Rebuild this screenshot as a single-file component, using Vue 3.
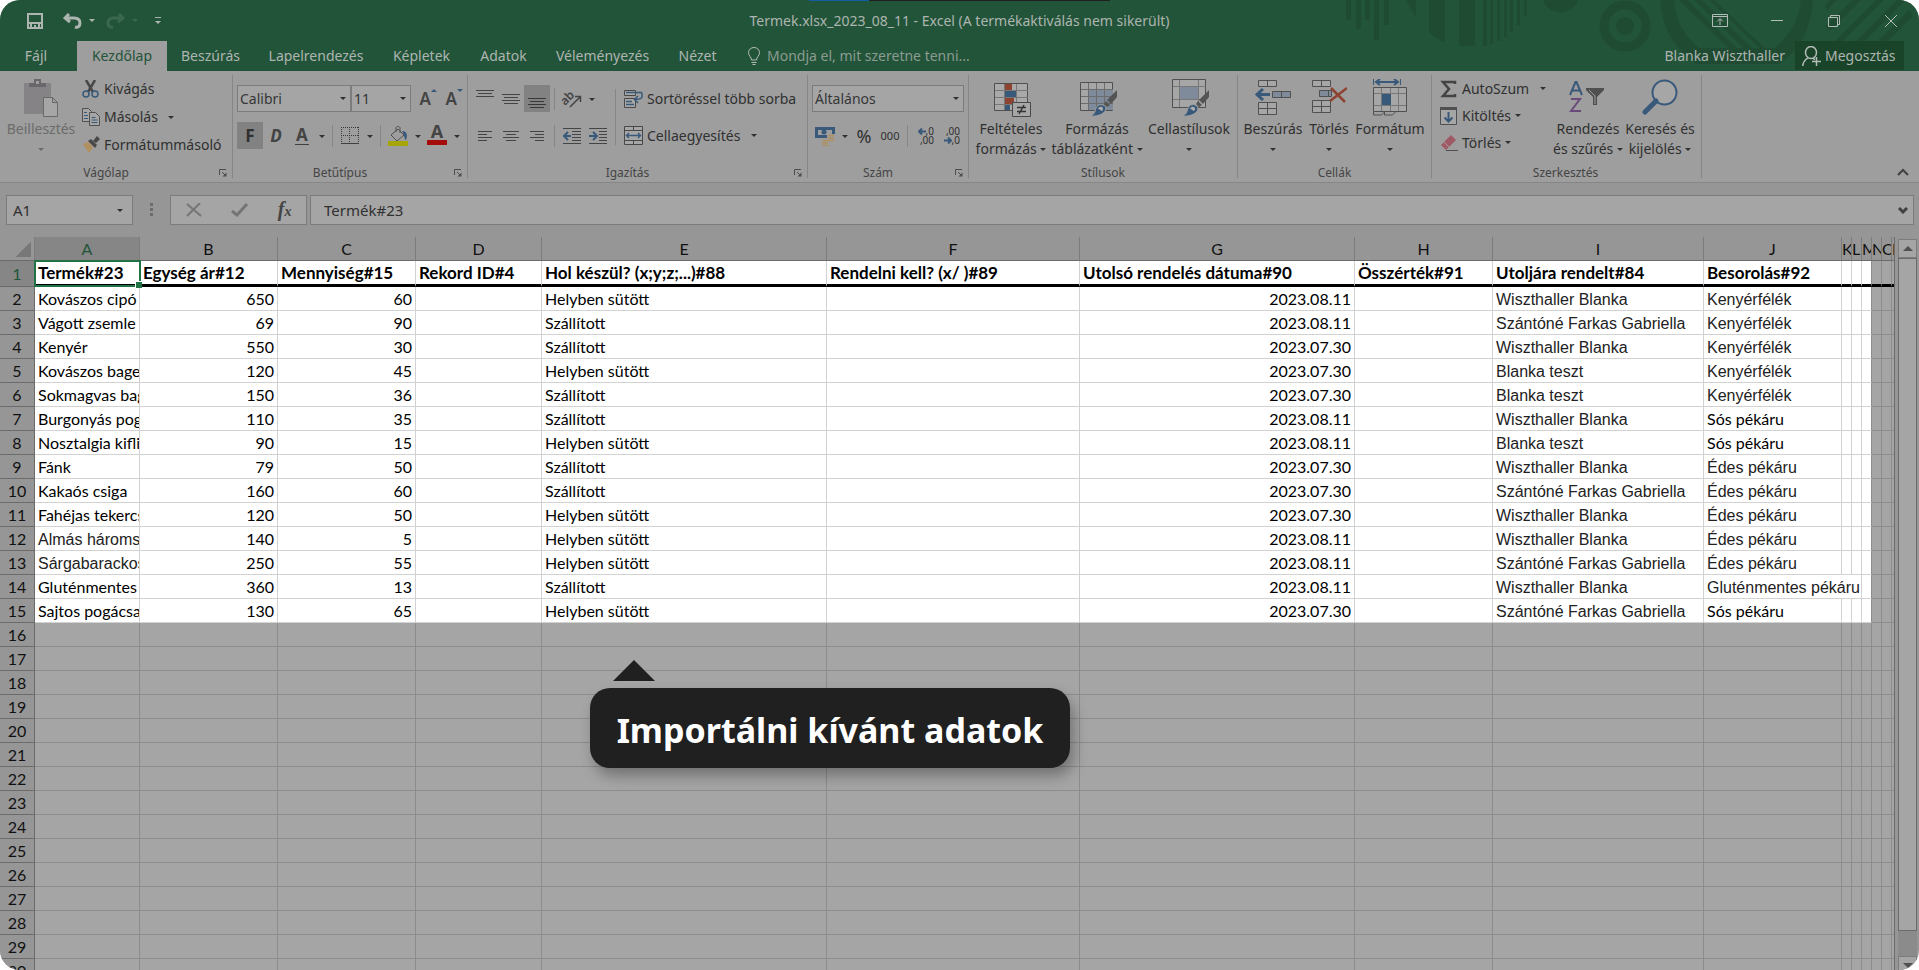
<script setup>
import { ref } from 'vue'

const nameBox = ref('A1')
const formula = ref('Termék#23')
const fontName = ref('Calibri')
const fontSize = ref('11')
const numberFormat = ref('Általános')

const tabs = ['Fájl', 'Kezdőlap', 'Beszúrás', 'Lapelrendezés', 'Képletek', 'Adatok', 'Véleményezés', 'Nézet']
const columns = 'ABCDEFGHIJKLMNOP'.split('')
const headings = [
  'Termék#23', 'Egység ár#12', 'Mennyiség#15', 'Rekord ID#4', 'Hol készül? (x;y;z;...)#88',
  'Rendelni kell? (x/ )#89', 'Utolsó rendelés dátuma#90', 'Összérték#91', 'Utoljára rendelt#84', 'Besorolás#92',
]
const W = 'Wiszthaller Blanka'
const S = 'Szántóné Farkas Gabriella'
const B = 'Blanka teszt'
const products = [
  ['Kovászos cipó', 650, 60, 'Helyben sütött', '2023.08.11', W, 'Kenyérfélék'],
  ['Vágott zsemle', 69, 90, 'Szállított', '2023.08.11', S, 'Kenyérfélék'],
  ['Kenyér', 550, 30, 'Szállított', '2023.07.30', W, 'Kenyérfélék'],
  ['Kovászos bagett', 120, 45, 'Helyben sütött', '2023.07.30', B, 'Kenyérfélék'],
  ['Sokmagvas bagett', 150, 36, 'Szállított', '2023.07.30', B, 'Kenyérfélék'],
  ['Burgonyás pogácsa', 110, 35, 'Szállított', '2023.08.11', W, 'Sós pékáru'],
  ['Nosztalgia kifli', 90, 15, 'Helyben sütött', '2023.08.11', B, 'Sós pékáru'],
  ['Fánk', 79, 50, 'Szállított', '2023.07.30', W, 'Édes pékáru'],
  ['Kakaós csiga', 160, 60, 'Szállított', '2023.07.30', S, 'Édes pékáru'],
  ['Fahéjas tekercs', 120, 50, 'Helyben sütött', '2023.07.30', W, 'Édes pékáru'],
  ['Almás háromszög', 140, 5, 'Helyben sütött', '2023.08.11', W, 'Édes pékáru'],
  ['Sárgabarackos táska', 250, 55, 'Helyben sütött', '2023.08.11', S, 'Édes pékáru'],
  ['Gluténmentes kenyér', 360, 13, 'Szállított', '2023.08.11', W, 'Gluténmentes pékáru'],
  ['Sajtos pogácsa', 130, 65, 'Helyben sütött', '2023.07.30', S, 'Sós pékáru'],
]

const cell = (value, kind = '', span = 1, lit = true) => ({ value, kind, span, lit })
const dataRows = products.map(([name, price, qty, made, date, by, type]) => {
  const wide = type.startsWith('Glut')
  return [
    cell(name, name.startsWith('Almás') || name.startsWith('Sárga') ? 'arial' : ''),
    cell(price, 'num'), cell(qty, 'num'), cell(''), cell(made), cell(''), cell(date, 'num'), cell(''),
    cell(by, 'arial'),
    cell(type, type.startsWith('Sós') ? '' : 'arial', wide ? 3 : 1),
    ...(wide ? [] : [cell(''), cell('')]),
    cell('', 'edge'), cell('', '', 1, false), cell('', '', 1, false), cell('', '', 1, false),
  ]
})
const headRow = columns.map((c, i) => cell(headings[i] || '', i === 0 ? 'active' : i === 12 ? 'edge' : '', 1, i < 13))
const emptyRows = Array.from({ length: 15 }, () => columns.map(() => cell('', '', 1, false)))
const rows = [headRow, ...dataRows, ...emptyRows]
</script>

<template>
  <div class="window">
    <svg class="defs" aria-hidden="true">
      <symbol id="launcher" viewBox="0 0 8 8"><path d="M.5 6V.5H7M3 3l3.500 3.500" fill="none" stroke="#4d4d4d" /><path d="M7.500 3.500v4h-4z" fill="#4d4d4d" /></symbol>
      <symbol id="brush" viewBox="0 0 28 28">
        <path d="M27 1v7l-6 7-4-4z" fill="#545454" /><path d="M16 12l4 4-3 2-3-3z" fill="#545454" />
        <path d="M0 27c4-1 5-4 6-8 2-5 9-4 10 0 0 5-7 9-16 8z" fill="#38597a" stroke="#a0a0a0" />
        <path d="M8 20c1-3 5-3 5 0 0 1-1 2-2 2 0-1-1-2-3-2z" fill="#b0b0b0" />
      </symbol>
    </svg>

    <header class="top">
      <svg class="pattern" width="580" height="71" viewBox="0 0 580 71" aria-hidden="true">
        <g fill="#1f4b33">
          <path d="M7 0h5v20H7zM17 0h5v29h-5zM26 0h5v20h-5zM35 0h5v40h-5zM45 0h5v25h-5zM67 0h10v18zM90 0h16v42q-8-2-16-10zM120 0h16v46h-16zM144 0h4v46h-4zM151 0h3v44h-3zM158 0h3v41h-3zM165 0h3v37h-3zM171 0h3v32h-3zM178 0h3v25h-3zM185 0h3v16h-3z" />
          <path d="M204 0a18 16 0 0 0 35 0z" /><circle cx="286" cy="26" r="9" />
          <path d="M321 0h14q2 30 25 48h75q24-18 27-48h12q-2 42-34 64h-82Q324 42 321 0z" />
          <path d="M340 0h8l60 58h-8zM355 0h8l58 56h-8zM370 0h5l57 54h-5z" />
          <path d="M486 5l5-5h7l-10 10zM486 27l27-27h9l-31 31zM496 41l41-41h8l-44 44zM508 50l50-50h9l-52 52zM530 50l40-40 4 6-36 36z" />
        </g>
        <circle cx="286" cy="26" r="21" fill="none" stroke="#1f4b33" stroke-width="9" />
      </svg>

      <div class="titlebar">
        <div class="quick">
          <button aria-label="Mentés"><svg width="16" height="16" viewBox="0 0 16 16"><path d="M1 1h14v14H1zM1 10h14M4 15v-4M12 15v-4" fill="none" stroke="#adb5b0" stroke-width="2" /><path d="M7 12h2v3H7z" fill="#adb5b0" /></svg></button>
          <button aria-label="Visszavonás" class="undo"><svg width="19" height="16" viewBox="0 0 19 16"><path d="M6 1L2 5l5 4M2 5h9c4 0 6 2 6 5 0 3-2 5-5 4" fill="none" stroke="#adb5b0" stroke-width="3" /></svg><i class="caret"></i></button>
          <button aria-label="Mégis" class="redo"><svg width="19" height="16" viewBox="0 0 19 16"><path d="M13 1l4 4-5 4M17 5H8C4 5 2 7 2 10c0 3 2 5 5 4" fill="none" stroke="#3a684f" stroke-width="3" /></svg><i class="caret"></i></button>
          <button aria-label="Testreszabás" class="custom"><i class="bar"></i><i class="caret"></i></button>
        </div>
        <h1>Termek.xlsx_2023_08_11 - Excel (A termékaktiválás nem sikerült)</h1>
        <div class="controls">
          <button aria-label="Menüszalag"><svg width="16" height="13" viewBox="0 0 16 13"><path d="M.5.5h15v12H.5zM.5 2.500h15M8 11V5M5 7.500L8 4.500l3 3" fill="none" stroke="#b4bcb7" /></svg></button>
          <button aria-label="Kis méret"><svg width="12" height="12" viewBox="0 0 12 12"><path d="M0 5.500h12" stroke="#b4bcb7" /></svg></button>
          <button aria-label="Előző méret"><svg width="12" height="12" viewBox="0 0 12 12"><path d="M.5 2.500h9v9h-9zM2.500 2V.5h9v9H10" fill="none" stroke="#b4bcb7" /></svg></button>
          <button aria-label="Bezárás"><svg width="12" height="12" viewBox="0 0 12 12"><path d="M0 0l12 12M12 0L0 12" stroke="#b4bcb7" /></svg></button>
        </div>
      </div>

      <div class="tabrow">
        <nav class="tabs">
          <button v-for="tab in tabs" :key="tab" :class="{ current: tab === 'Kezdőlap' }">{{ tab }}</button>
        </nav>
        <button class="tell">
          <svg width="12" height="19" viewBox="0 0 12 19"><path d="M3.500 13c0-3-3-4-3-7.500a5.500 5 0 0 1 11 0c0 3.500-3 4.500-3 7.500zM3.500 15.500h5M4.500 17.500h3" fill="none" stroke="#b4bcb7" /></svg>
          Mondja el, mit szeretne tenni...
        </button>
        <span class="user">Blanka Wiszthaller</span>
        <button class="share">
          <svg width="19" height="20" viewBox="0 0 19 20"><ellipse cx="9" cy="6.500" rx="5.500" ry="6" fill="none" stroke="#b4bcb7" stroke-width="1.500" /><path d="M.8 20c0-4 2-6 5-8M11 12.500l2 1M10 15.500h9M14.500 11v9" fill="none" stroke="#b4bcb7" stroke-width="1.500" /></svg>
          Megosztás
        </button>
      </div>
    </header>

    <section class="ribbon" aria-label="Menüszalag">
      <div class="group clipboard">
        <div class="body">
          <button class="big off">
            <svg width="36" height="38" viewBox="0 0 36 38"><path d="M1 4h27v31H1z" fill="#858386" /><path d="M6 8V4h5V0h7v4h5v4z" fill="#69676b" /><path d="M13 2h3v3h-3z" fill="#9e9e9e" /><path d="M20.500 18.500h9l5 5v14h-14zM29.500 18.500v5h5" fill="#a6a6a6" stroke="#696969" /></svg>
            <span>Beillesztés</span><span><i class="caret"></i></span>
          </button>
          <div class="stack">
            <button><svg width="18" height="18" viewBox="0 0 18 18"><path d="M4 0l7 12M13 0L6 12" stroke="#484848" stroke-width="2.500" /><circle cx="4" cy="14" r="3" fill="none" stroke="#38597a" stroke-width="1.500" /><circle cx="13" cy="14" r="3" fill="none" stroke="#38597a" stroke-width="1.500" /></svg>Kivágás</button>
            <button><svg width="18" height="18" viewBox="0 0 18 18"><path d="M.5.5h6l3 3v10h-9z" fill="#a6a6a6" stroke="#505050" /><path d="M7.500 4.500h6l4 4v9h-10z" fill="#a6a6a6" stroke="#505050" /><path d="M2 4.500h3M2 7.500h4M2 10.500h4M9.500 9.500h4M9.500 12h6M9.500 14.500h6" stroke="#38597a" /></svg>Másolás<i class="caret"></i></button>
            <button><svg width="18" height="18" viewBox="0 0 18 18"><path d="M1 8l5-2 5 5-4 6z" fill="#b0905f" /><path d="M6 5l3-2 6 6-2 3z" fill="#484848" /><path d="M11 5l4-5 3 3-4 4z" fill="#484848" /></svg>Formátummásoló</button>
          </div>
        </div>
        <footer>Vágólap<button class="launch" aria-label="Vágólap beállításai"><svg width="8" height="8"><use href="#launcher" /></svg></button></footer>
      </div>
      <i class="rule"></i>

      <div class="group font">
        <div class="body rows">
          <div class="line">
            <div class="pick"><select v-model="fontName" aria-label="Betűtípus"><option>Calibri</option></select><i class="caret"></i></div>
            <div class="pick size"><select v-model="fontSize" aria-label="Betűméret"><option>11</option></select><i class="caret"></i></div>
            <button class="grow"><b>A</b><i class="caret up"></i></button>
            <button class="grow"><b>A</b><i class="caret blue"></i></button>
          </div>
          <div class="line">
            <button class="tool pressed"><b>F</b></button>
            <button class="tool"><b class="it">D</b></button>
            <button class="tool"><b class="ul">A</b></button>
            <button class="drop" aria-label="Aláhúzás"><i class="caret"></i></button>
            <i class="mini"></i>
            <button class="tool" aria-label="Szegélyek"><svg width="18" height="18" viewBox="0 0 18 18"><path d="M.5 0v16M17.500 0v16M8.500 0v16M0 .5h18M0 8.500h18" stroke="#383838" stroke-dasharray="1 1" /><path d="M0 16.500h18" stroke="#404040" /></svg></button>
            <button class="drop" aria-label="Szegély típusa"><i class="caret"></i></button>
            <i class="mini"></i>
            <button class="tool" aria-label="Kitöltőszín"><svg width="20" height="20" viewBox="0 0 20 20"><path d="M3 9l7-6 6 6-7 6zM8 6V2c0-2 4-2 4 0v5" fill="none" stroke="#505050" /><path d="M14 5c5 0 6 4 4 9-2-1-1-4-4-9z" fill="#38597a" /><path d="M0 15h20v5H0z" fill="#a6a60b" /></svg></button>
            <button class="drop" aria-label="Kitöltőszín választása"><i class="caret"></i></button>
            <button class="tool colour" aria-label="Betűszín"><b>A</b><i class="red"></i></button>
            <button class="drop" aria-label="Betűszín választása"><i class="caret"></i></button>
          </div>
        </div>
        <footer>Betűtípus<button class="launch" aria-label="Betűtípus beállításai"><svg width="8" height="8"><use href="#launcher" /></svg></button></footer>
      </div>
      <i class="rule"></i>

      <div class="group align">
        <div class="body">
          <div class="rows">
            <div class="line">
              <button class="tool" aria-label="Felülre"><svg width="18" height="18" viewBox="0 0 18 18"><path d="M0 .5h18M2 3.500h14M0 6.500h18" stroke="#444" /></svg></button>
              <button class="tool" aria-label="Középre"><svg width="18" height="18" viewBox="0 0 18 18"><path d="M0 4.500h18M2 7.500h14M0 10.500h18M2 13.500h14" stroke="#444" /></svg></button>
              <button class="tool pressed" aria-label="Alulra"><svg width="18" height="18" viewBox="0 0 18 18"><path d="M0 8.500h18M2 11.500h14M0 14.500h18M2 17.500h14" stroke="#383838" /></svg></button>
              <i class="mini"></i>
              <button class="tool" aria-label="Tájolás"><svg width="20" height="18" viewBox="0 0 20 18"><text x="0" y="13" transform="rotate(-45 5 11)" font-family="Noto Sans, sans-serif" font-weight="600" font-size="12" fill="#444">ab</text><path d="M8 17L18 7M13 6.500h5.500V12" stroke="#444" stroke-width="1.500" fill="none" /></svg></button>
              <button class="drop" aria-label="Tájolás választása"><i class="caret"></i></button>
            </div>
            <div class="line">
              <button class="tool" aria-label="Balra"><svg width="16" height="12" viewBox="0 0 16 12"><path d="M1 1.500h14M1 4.500h9M1 7.500h14M1 10.500h9" stroke="#444" /></svg></button>
              <button class="tool" aria-label="Középre igazítás"><svg width="16" height="12" viewBox="0 0 16 12"><path d="M0 1.500h16M3 4.500h10M0 7.500h16M3 10.500h10" stroke="#444" /></svg></button>
              <button class="tool" aria-label="Jobbra"><svg width="16" height="12" viewBox="0 0 16 12"><path d="M1 1.500h14M6 4.500h9M1 7.500h14M6 10.500h9" stroke="#444" /></svg></button>
              <i class="mini"></i>
              <button class="tool" aria-label="Behúzás csökkentése"><svg width="18" height="16" viewBox="0 0 18 16"><path d="M0 .5h18M9 3.500h9M9 6.500h9M9 9.500h9M9 12.500h9M0 15.500h18" stroke="#444" /><path d="M1 8h7M5 4L1 8l4 4" stroke="#38597a" stroke-width="2" fill="none" /></svg></button>
              <button class="tool" aria-label="Behúzás növelése"><svg width="18" height="16" viewBox="0 0 18 16"><path d="M0 .5h18M10 3.500h8M10 6.500h8M10 9.500h8M10 12.500h8M0 15.500h18" stroke="#444" /><path d="M0 8h7M4 4l4 4-4 4" stroke="#38597a" stroke-width="2" fill="none" /></svg></button>
            </div>
          </div>
          <i class="tall"></i>
          <div class="rows">
            <button class="line text"><svg width="19" height="18" viewBox="0 0 19 18"><path d="M.5.5h11v5H.5zM.5 8.500h11v9H.5z" fill="#a6a6a6" stroke="#484848" /><path d="M2 2.500h15.500c2 6-1 7-6 7M14 6l-3.500 3.500L14 13M2 11.500h6M2 14.500h8" fill="none" stroke="#38597a" stroke-width="1.500" /></svg>Sortöréssel több sorba</button>
            <button class="line text"><svg width="19" height="19" viewBox="0 0 19 19"><path d="M.5.5h18v18H.5zM.5 4.500h18M.5 14.500h18M9.500 0v4M9.500 15v4" fill="#a6a6a6" stroke="#484848" /><path d="M3 9.500h13M5 7L2.500 9.500 5 12M14 7l2.500 2.500L14 12" stroke="#38597a" stroke-width="1.500" fill="none" /></svg>Cellaegyesítés<i class="caret"></i></button>
          </div>
        </div>
        <footer>Igazítás<button class="launch" aria-label="Igazítás beállításai"><svg width="8" height="8"><use href="#launcher" /></svg></button></footer>
      </div>
      <i class="rule"></i>

      <div class="group number">
        <div class="body rows">
          <div class="line"><div class="pick wide"><select v-model="numberFormat" aria-label="Számformátum"><option>Általános</option></select><i class="caret"></i></div></div>
          <div class="line">
            <button class="tool" aria-label="Pénznem"><svg width="20" height="20" viewBox="0 0 20 20"><path d="M1.500 2.500h17v8h-17z" fill="none" stroke="#38597a" stroke-width="3" /><circle cx="9" cy="6" r="2.500" fill="#38597a" /><path d="M12 8h8v9h-5v3H6v-7h6z" fill="#9e9e9e" /><path d="M13 9.500h6M13 12h6M13 14.500h6M7 14.500h6M7 17h6M7 19.500h7" stroke="#b0905f" stroke-width="1.500" /></svg></button>
            <button class="drop" aria-label="Pénznem választása"><i class="caret"></i></button>
            <button class="tool pct">%</button>
            <button class="tool zero">000</button>
            <i class="mini"></i>
            <button class="tool dec" aria-label="Több tizedesjegy"><span><svg width="8" height="7" viewBox="0 0 8 7"><path d="M1 3.500h7M4 .5l-3 3 3 3" fill="none" stroke="#38597a" stroke-width="2" /></svg>,0</span><span>,00</span></button>
            <button class="tool dec" aria-label="Kevesebb tizedesjegy"><span>,00</span><span><svg width="8" height="7" viewBox="0 0 8 7"><path d="M0 3.500h7M4 .5l3 3-3 3" fill="none" stroke="#38597a" stroke-width="2" /></svg>,0</span></button>
          </div>
        </div>
        <footer>Szám<button class="launch" aria-label="Szám beállításai"><svg width="8" height="8"><use href="#launcher" /></svg></button></footer>
      </div>
      <i class="rule"></i>

      <div class="group styles">
        <div class="body">
          <button class="big">
            <svg width="38" height="38" viewBox="0 0 38 38"><path d="M.5 4.500h33v27H.5z" fill="#a9a9a9" stroke="#505050" /><path d="M10.500 5v26M22.500 5v26M1 11.500h33M1 18.500h33M1 25.500h33" stroke="#777" /><path d="M11 5h7v6h-7zM11 19h9v6h-9z" fill="#8e4330" /><path d="M11 12h11v6H11zM11 26h5v5h-5z" fill="#38597a" /><path d="M18.500 23.500h18v14h-18z" fill="#a6a6a6" stroke="#484848" /><path d="M23 28.500h9M23 32.500h9M30 26l-5 9" stroke="#333" stroke-width="1.500" /></svg>
            <span>Feltételes</span><span>formázás <i class="caret"></i></span>
          </button>
          <button class="big table">
            <svg width="38" height="38" viewBox="0 0 38 38"><path d="M.5 3.500h32v28h-32z" fill="#a6a6a6" stroke="#505050" /><path d="M9 11h24v20H9z" fill="#7f8b9a" /><path d="M8.500 4v27M16.500 4v27M24.500 4v27M1 10.500h32M1 17.500h32M1 24.500h32" stroke="#6c6c6c" /><use href="#brush" x="10" y="10" width="28" height="28" /></svg>
            <span>Formázás</span><span>táblázatként <i class="caret"></i></span>
          </button>
          <button class="big cellstyle">
            <svg width="38" height="38" viewBox="0 0 38 38"><path d="M.5.5h33v28H.5z" fill="#a6a6a6" stroke="#505050" /><path d="M8 8h18v12H8z" fill="#7f8b9a" /><path d="M7.500 1v27M26.500 1v27M1 7.500h33M1 20.500h33" stroke="#777" /><use href="#brush" x="10" y="10" width="28" height="28" /></svg>
            <span>Cellastílusok</span><span><i class="caret"></i></span>
          </button>
        </div>
        <footer>Stílusok</footer>
      </div>
      <i class="rule"></i>

      <div class="group cells">
        <div class="body">
          <button class="big insert">
            <svg width="36" height="38" viewBox="0 0 36 38"><path d="M3.500 1.500h18v6h-18zM12.500 1v7M3.500 23.500h18v12h-18zM12.500 24v12M3.500 29.500h18" fill="#a6a6a6" stroke="#505050" /><path d="M17.500 12.500h18v6h-18zM26.500 12v7" fill="#7f8b9a" stroke="#505050" /><path d="M2 15.500h13M8 10l-6 5.500 6 5.500" fill="none" stroke="#38597a" stroke-width="3" /></svg>
            <span>Beszúrás</span><span><i class="caret"></i></span>
          </button>
          <button class="big delete">
            <svg width="36" height="38" viewBox="0 0 36 38"><path d="M1.500 1.500h18v6h-18zM10.500 1v7M1.500 21.500h18v12h-18zM10.500 22v12M1.500 27.500h18" fill="#a6a6a6" stroke="#505050" /><path d="M8.500 11.500h12v6h-12zM17.500 12v6" fill="#7f8b9a" stroke="#505050" /><path d="M20 9l14 14M36 9L19 22" stroke="#8e4330" stroke-width="2.500" /></svg>
            <span>Törlés</span><span><i class="caret"></i></span>
          </button>
          <button class="big format">
            <svg width="36" height="38" viewBox="0 0 36 38"><path d="M1.500 0v6M28.500 0v6" stroke="#38597a" /><path d="M5 3h20M8 0L4 3l4 3M22 0l4 3-4 3" stroke="#38597a" stroke-width="2" fill="none" /><path d="M1.500 8.500h33v24h-33z" fill="#a6a6a6" stroke="#505050" /><path d="M9.500 9v23M18.500 9v23M26.500 9v23M2 14.500h32M2 26.500h32" stroke="#777" /><path d="M10 15h9v11h-9z" fill="#38597a" /><path d="M1.500 33v3h8l3-3v3h8l3-3" fill="none" stroke="#505050" /></svg>
            <span>Formátum</span><span><i class="caret"></i></span>
          </button>
        </div>
        <footer>Cellák</footer>
      </div>
      <i class="rule"></i>

      <div class="group editing">
        <div class="body">
          <div class="stack">
            <button><svg width="18" height="18" viewBox="0 0 18 18"><path d="M15 4V2H3l6 7-6 7h12v-2" fill="none" stroke="#444" stroke-width="2.500" /></svg>AutoSzum<i class="caret far"></i></button>
            <button><svg width="18" height="18" viewBox="0 0 18 18"><path d="M.5 1.500h16v16H.5z" fill="#a6a6a6" stroke="#505050" /><path d="M0 1.500h17" stroke="#505050" stroke-width="3" /><path d="M8.500 5v9M4.500 10.500l4 4 4-4" fill="none" stroke="#38597a" stroke-width="2" /></svg>Kitöltés<i class="caret near"></i></button>
            <button><svg width="18" height="18" viewBox="0 0 18 18"><path d="M1 11L11 1l5 5L6 16z" fill="#a05a66" /><path d="M4 8l5 5" stroke="#9e9e9e" /><path d="M6 16.500h12" stroke="#505050" /></svg>Törlés<i class="caret near"></i></button>
          </div>
          <button class="big sort">
            <svg width="36" height="38" viewBox="0 0 36 38"><path d="M2 16L7.500 3h1L14 16M4 11.500h8" fill="none" stroke="#38597a" stroke-width="2" /><path d="M3 20h9L3 32h10" fill="none" stroke="#6a4a7a" stroke-width="2" /><path d="M18 9h18v2l-7 7v8h-4v-8l-7-7z" fill="#505050" /><path d="M21 11l6 6v8" stroke="#9e9e9e" fill="none" /></svg>
            <span>Rendezés</span><span>és szűrés <i class="caret"></i></span>
          </button>
          <button class="big">
            <svg width="36" height="38" viewBox="0 0 36 38"><circle cx="22.500" cy="13.500" r="12" fill="#a6a6a6" stroke="#38597a" stroke-width="2" /><path d="M14 22L3 33" stroke="#38597a" stroke-width="5" stroke-linecap="round" /></svg>
            <span>Keresés és</span><span>kijelölés <i class="caret"></i></span>
          </button>
        </div>
        <footer>Szerkesztés</footer>
      </div>
      <i class="rule"></i>
      <button class="collapse" aria-label="Menüszalag összecsukása"><svg width="12" height="8" viewBox="0 0 12 8"><path d="M1 7l5-5 5 5" fill="none" stroke="#404040" stroke-width="2" /></svg></button>
    </section>

    <section class="formulabar" aria-label="Szerkesztőléc">
      <div class="namebox"><input v-model="nameBox" aria-label="Név mező" /><i class="caret"></i></div>
      <i class="dots"></i>
      <div class="fx">
        <button aria-label="Mégse"><svg width="16" height="14" viewBox="0 0 16 14"><path d="M1 1l14 12M14 0L1 13" stroke="#757575" stroke-width="2" /></svg></button>
        <button aria-label="Beírás"><svg width="18" height="14" viewBox="0 0 18 14"><path d="M1 8l5 4L16 1" fill="none" stroke="#757575" stroke-width="3" /></svg></button>
        <button class="f">f<small>x</small></button>
      </div>
      <div class="formula"><input v-model="formula" aria-label="Képlet" /><svg width="10" height="7" viewBox="0 0 10 7"><path d="M1 1l4 4 4-4" fill="none" stroke="#404040" stroke-width="3" /></svg></div>
    </section>

    <main class="sheet">
      <div class="grid">
        <table>
          <colgroup><col class="cn" /><col v-for="c in columns" :key="c" :class="'c' + c" /></colgroup>
          <thead>
            <tr>
              <th class="corner" aria-label="Összes kijelölése"></th>
              <th v-for="c in columns" :key="c" scope="col" :class="{ sel: c === 'A', thin: c > 'J' }">{{ c }}</th>
            </tr>
          </thead>
          <tbody>
            <tr v-for="(row, r) in rows" :key="r" :class="{ first: r === 0 }">
              <th scope="row">{{ r + 1 }}</th>
              <td v-for="(c, i) in row" :key="i" :colspan="c.span" :class="[c.kind, { lit: c.lit && r < 15 }]">{{ c.value }}</td>
            </tr>
          </tbody>
        </table>
      </div>
      <div class="scroll">
        <button aria-label="Fel"><i class="caret upward"></i></button>
        <i class="thumb"></i>
        <i class="track"></i>
        <button class="last" aria-label="Le"><i class="caret"></i></button>
      </div>
    </main>

    <aside class="callout">Importálni kívánt adatok</aside>
  </div>
</template>

<style>
html, body { background: #fff; }
</style>

<style scoped>
* { box-sizing: border-box; }
.window {
  position: relative; display: flex; flex-direction: column; height: 100vh; overflow: hidden;
  border-radius: 20px; background: #969696; color: #303030;
  font-family: "Noto Sans", "Open Sans", sans-serif; font-size: 14px; line-height: 20px; white-space: nowrap;
}
.defs { position: absolute; width: 0; height: 0; }
button { font: inherit; color: inherit; background: none; border: 0; padding: 0; margin: 0; }
svg { flex: none; display: block; }
.caret { display: inline-block; flex: none; width: 0; height: 0; border: 3px solid transparent; border-top-color: currentColor; border-bottom: 0; vertical-align: 3px; }

.top { position: relative; background: #225439; color: #adb5b0; flex: none; }
.top::before { content: ""; position: absolute; top: 0; left: 809px; width: 301px; height: 1px; background: linear-gradient(90deg, #125ea5 60px, #202020 60px); }
.pattern { position: absolute; right: 0; top: 0; }
.titlebar { position: relative; display: grid; grid-template-columns: 1fr auto 1fr; height: 41px; align-items: center; }
.titlebar h1 { margin: 0; font-size: 14px; font-weight: 400; }
.quick { display: flex; align-items: center; padding-left: 27px; }
.quick button { display: flex; align-items: center; gap: 7px; }
.quick .undo { margin-left: 20px; }
.quick .redo { margin-left: 11px; color: #3a684f; }
.quick .custom { flex-direction: column; gap: 3px; margin-left: 17px; }
.bar { width: 6px; height: 1px; background: currentColor; }
.controls { display: grid; grid-template-columns: repeat(4, 57px); justify-content: end; }
.controls button { display: flex; justify-content: center; align-items: center; height: 38px; }
.tabrow { position: relative; display: flex; height: 30px; }
.tabs { display: grid; grid-template-columns: 77px 90px 87px 124px 87px 77px 121px 69px; }
.tabs button:first-child { padding-right: 5px; }
.tabs .current { background: #9e9e9e; color: #225439; }
.tell { display: flex; align-items: center; gap: 7px; margin-left: 16px; color: #8a9b91; }
.user { margin-left: auto; padding: 5px 10px 0 0; }
.share { display: flex; align-items: center; gap: 4px; padding: 0 8px 0 7px; margin-right: 15px; height: 29px; width: 109px; background: #1a4429; }

.ribbon { display: flex; height: 112px; flex: none; background: #9e9e9e; border-bottom: 1px solid #868686; }
.rule { width: 1px; height: 103px; margin-top: 4px; background: #868686; }
.group { display: flex; flex-direction: column; justify-content: space-between; height: 110px; flex: none; }
.group footer { position: relative; height: 16px; line-height: 16px; font-size: 12px; text-align: center; color: #454545; }
.launch { position: absolute; right: 5px; top: 4px; }
.body { display: flex; }
.clipboard { width: 232px; }
.clipboard footer { padding-right: 20px; }
.font { width: 234px; }
.font footer { padding-right: 20px; }
.align { width: 339px; }
.align footer { padding-right: 20px; }
.number { width: 160px; }
.number footer { padding-right: 20px; }
.styles { width: 268px; }
.styles .body { padding-left: 6px; }
.styles .big svg { margin-left: 4px; }
.cells { width: 193px; }
.cells .body { padding-left: 3px; }
.editing { width: 269px; }
.editing footer { padding-right: 2px; }
.big { display: flex; flex-direction: column; align-items: center; width: 72px; padding-top: 8px; }
.big svg { margin-bottom: 2px; }
.big span { height: 20px; }
.big.off { width: 78px; padding-left: 4px; color: #6c6c6c; }
.big.table { width: 100px; }
.big.cellstyle { width: 84px; }
.big.insert { width: 64px; }
.big.delete { width: 48px; }
.big.format { width: 74px; }
.stack { display: grid; grid-auto-rows: 28px; padding-top: 4px; padding-left: 4px; }
.stack button { display: flex; align-items: center; gap: 4px; }
.stack .caret { margin-left: 6px; }
.editing .stack { grid-auto-rows: 27px; width: 120px; padding-left: 8px; }
.stack .near { margin-left: 0; }
.rows { display: flex; flex-direction: column; gap: 10px; padding-top: 14px; }
.font .rows, .number .rows { padding-left: 4px; }
.line { display: flex; align-items: center; height: 27px; }
.pick { position: relative; width: 114px; height: 27px; }
.pick.size { width: 60px; }
.pick.wide { width: 152px; }
.pick select { width: 100%; height: 27px; padding: 0 2px; border: 1px solid #7c7c7c; border-radius: 0; background: #a5a5a5; color: #363636; font: inherit; appearance: none; }
.pick .caret { position: absolute; right: 5px; top: 12px; }
.grow { display: flex; align-items: center; width: 26px; justify-content: flex-end; color: #444; }
.grow b { font-size: 17px; font-weight: 600; line-height: 20px; }
.grow .caret { align-self: flex-start; color: #38597a; }
.grow .up { border-top: 0; border-bottom: 3px solid #38597a; }
.tool { display: flex; align-items: center; justify-content: center; width: 26px; height: 27px; }
.tool b { font-size: 17px; color: #444; }
.pressed { background: #828282; }
.pressed b { color: #303030; }
.it { font-style: italic; }
.tool .ul { border-bottom: 1px solid #404040; padding: 0 1px; line-height: 18px; }
.drop { width: 13px; height: 27px; }
.mini { width: 1px; height: 22px; margin: 0 4px; background: #868686; }
.tool.colour { flex-direction: column; justify-content: flex-start; }
.tool.colour b { font-size: 18px; line-height: 18px; }
.red { width: 20px; height: 5px; background: #a60b0b; }
.align > .body { padding-left: 4px; }
.tall { width: 1px; height: 56px; margin: 18px 8px 0 4px; background: #868686; }
.line.text { gap: 4px; }
.line.text .caret { margin-left: 7px; }
.pct { font-size: 18px; }
.zero { font-size: 11px; }
.number .mini { margin: 0 2px 0 4px; }
.dec { flex-direction: column; font-size: 10px; line-height: 9px; align-items: flex-end; padding-right: 2px; }
.dec span { display: flex; align-items: center; }
.editing .sort svg { margin-right: 4px; }
.stack .far { margin-left: 7px; }
.collapse { margin: auto 10px 6px auto; }

.formulabar { display: flex; flex: none; padding: 12px 5px 11px 6px; height: 54px; font-size: 15px; }
.namebox, .fx, .formula { display: flex; align-items: center; height: 30px; border: 1px solid #7c7c7c; background: #a5a5a5; }
.namebox { width: 127px; padding-right: 9px; }
.formulabar input { flex: 1; min-width: 0; border: 0; padding: 0 6px; background: none; font: inherit; color: #303030; }
.dots { width: 3px; height: 13px; margin: 8px 17px; background: repeating-linear-gradient(#6c6c6c 0 3px, transparent 3px 5px); }
.fx { width: 137px; justify-content: space-around; }
.fx .f { font-family: "Liberation Serif", serif; font-style: italic; font-weight: 700; font-size: 20px; color: #444; }
.fx small { font-size: 14px; }
.formula { flex: 1; margin-left: 3px; padding-right: 5px; }
.formula input { padding-left: 13px; }

.sheet { display: flex; flex: 1; min-height: 0; }
.grid { flex: 1; min-width: 0; overflow: hidden; border-right: 1px solid #6b6b6b; }
table { width: 100%; table-layout: fixed; border-collapse: separate; border-spacing: 0; font-family: Lato, "Noto Sans", sans-serif; font-size: 16px; line-height: 20px; }
.cn { width: 35px; } .cA { width: 105px; } .cB, .cC, .cH, .cJ { width: 138px; } .cD { width: 126px; } .cE { width: 285px; }
.cF { width: 253px; } .cG { width: 275px; } .cI { width: 211px; } .cK, .cL, .cM, .cN, .cO { width: 10px; }
th { font-weight: 400; color: #111; padding: 0; overflow: hidden; }
thead th { height: 24px; border-right: 1px solid #7c7c7c; border-bottom: 1px solid #6b6b6b; background: #969696; }
thead th.sel { background: #868686; color: #225439; }
thead th.thin { text-align: left; }
thead .corner { background: linear-gradient(135deg, transparent 50%, #787878 50%) 15px 4px / 16px 16px no-repeat #969696; }
tbody th { height: 24px; background: #969696; border-right: 1px solid #6b6b6b; border-bottom: 1px solid #6b6b6b; }
.first th { background: #868686; color: #225439; }
td { height: 24px; padding: 1px 3px 0; overflow: hidden; background: #a5a5a5; border-right: 1px solid #8c8c8c; border-bottom: 1px solid #8c8c8c; color: #000; }
th:last-child, td:last-child { border-right: 0; }
td.lit { background: #fff; border-color: #d2d2d2; }
td.edge { border-right-color: #8c8c8c; }
.num { text-align: right; }
.arial { font-family: "Liberation Sans", Arial, sans-serif; color: #222; padding-top: 3px; }
.first th, .first td { height: 26px; }
.first td, .first td.lit { font-size: 17px; font-weight: 700; border-bottom: 3px solid #000; padding-top: 0; }
.first td.active { position: relative; overflow: visible; }
.active::before { content: ""; position: absolute; inset: -1px -2px -3px -1px; border: 2px solid #217346; }
.active::after { content: ""; position: absolute; right: -3px; bottom: -4px; width: 6px; height: 6px; background: #217346; border: 1px solid #fff; border-width: 1px 0 0 1px; }

.scroll { display: flex; flex-direction: column; width: 24px; padding: 2px 2px 0 3px; }
.scroll button { display: flex; align-items: center; justify-content: center; flex: none; height: 19px; border: 1px solid #7c7c7c; background: #a5a5a5; color: #505050; }
.scroll .last { margin-bottom: -5px; }
.scroll .caret { border-width: 5px 5px 0; }
.scroll .upward { border-top: 0; border-bottom: 5px solid currentColor; }
.thumb { flex: 1; border: 1px solid #6b6b6b; background: #a5a5a5; }
.track { height: 25px; background: #8b8b8b; }

.callout {
  position: absolute; left: 590px; top: 688px; width: 480px; height: 80px; border-radius: 20px;
  background: #202020; color: #fff; text-align: center; line-height: 84px; font-size: 34px; font-weight: 700;
  box-shadow: 4px 8px 14px rgba(0, 0, 0, .3);
}
.callout::before { content: ""; position: absolute; left: 23px; top: -28px; border: 21px solid transparent; border-top: 0; border-bottom-color: #202020; }
</style>
